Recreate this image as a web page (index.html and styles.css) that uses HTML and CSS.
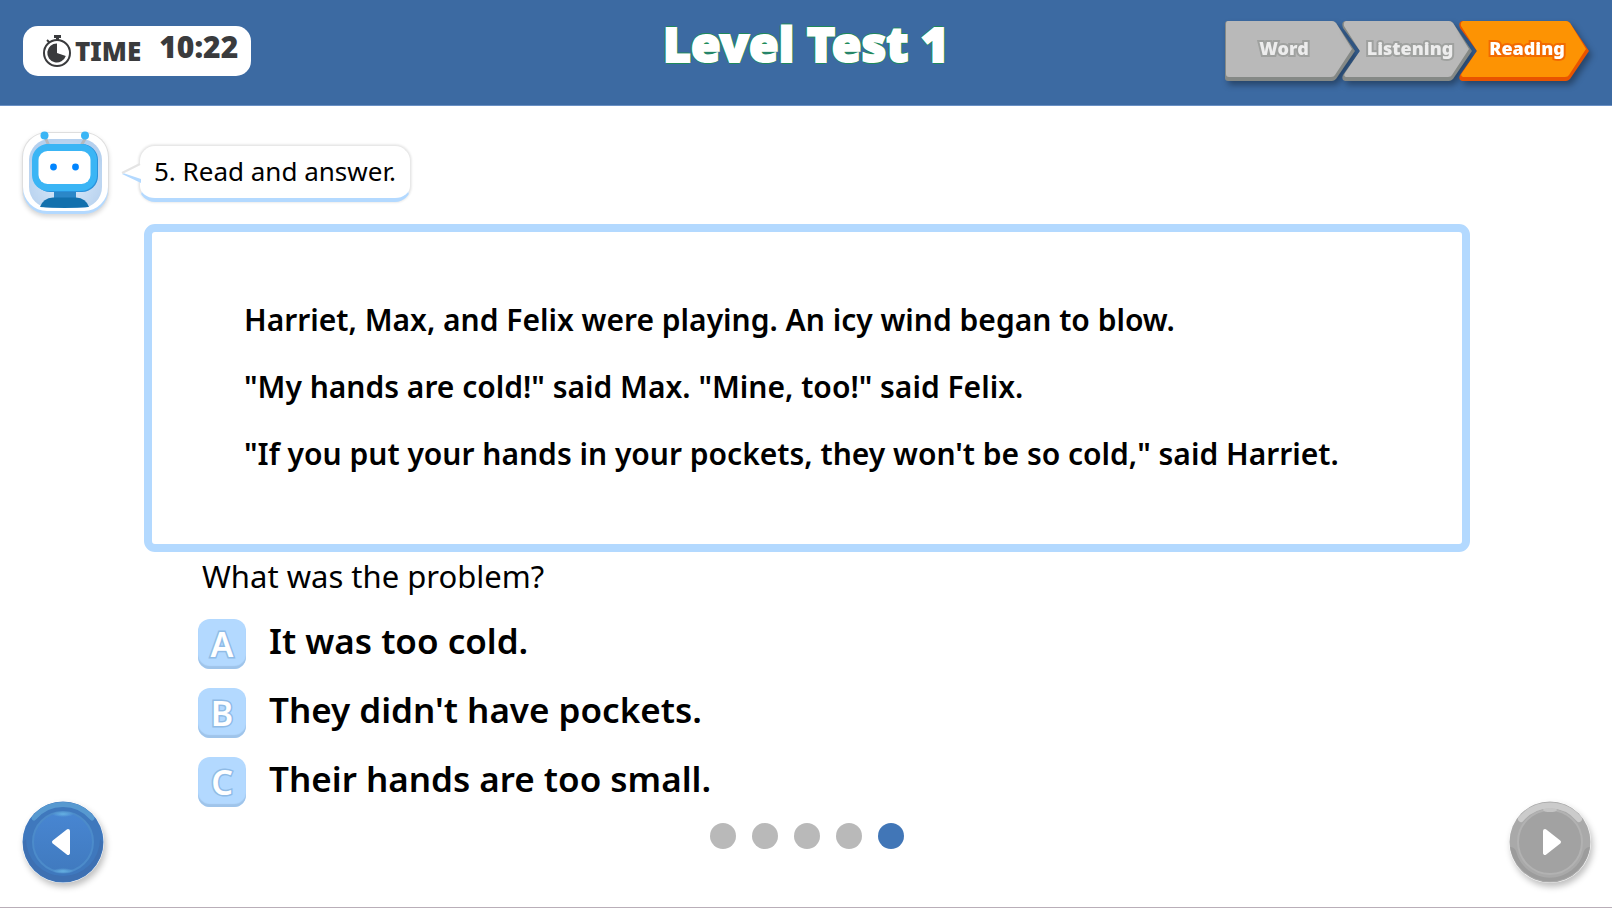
FILE: index.html
```html
<!DOCTYPE html>
<html lang="en">
<head>
<meta charset="utf-8">
<meta name="viewport" content="width=device-width, initial-scale=1">
<title>Level Test 1</title>
<link rel="stylesheet" href="styles.css">
</head>
<body>
<header class="topbar">
  <div class="timer">
    <svg class="timer-icon" viewBox="0 0 28 32" aria-hidden="true">
      <rect x="11" y="0" width="7" height="3" fill="#3a3b3d"/>
      <rect x="13" y="2" width="3" height="4" fill="#3a3b3d"/>
      <path d="M4 5l3 3" stroke="#3a3b3d" stroke-width="2"/>
      <circle cx="14" cy="18" r="13" fill="#fff" stroke="#3a3b3d" stroke-width="2"/>
      <path d="M14 18V8.500A9.500 9.500 0 1 0 22.800 21z" fill="#3a3b3d"/>
    </svg>
    <span class="timer-label">TIME</span>
    <time class="timer-value">10:22</time>
  </div>
  <h1 class="title">Level Test 1</h1>
  <ol class="steps">
    <li class="step step-first">
      <svg class="step-shape" viewBox="0 0 130 60" aria-hidden="true">
        <path d="M3 0H107Q109 0 111 2L130 30L111 58Q109 60 107 60H3Q0 60 0 57V3Q0 0 3 0Z" fill="#858986"/>
        <path d="M3 0H107Q109 0 111 2L127 28L110 54Q109 56 106 56H4Q1 56 1 53V3Q1 0 3 0Z" fill="#b9b9b9"/>
      </svg>
      <span class="step-name">Word</span>
    </li>
    <li class="step">
      <svg class="step-shape" viewBox="0 0 130 60" aria-hidden="true">
        <path d="M3 0H107Q109 0 111 2L130 30L111 58Q109 60 107 60H3Q-1 59 1 54L18 30L1 7Q-1 1 3 0Z" fill="#858986"/>
        <path d="M4 0H107Q109 0 111 2L127 28L110 54Q109 56 106 56H4Q1 55 3 52L18 30L2 5Q1 1 4 0Z" fill="#b9b9b9"/>
      </svg>
      <span class="step-name">Listening</span>
    </li>
    <li class="step step-current" aria-current="step">
      <svg class="step-shape" viewBox="0 0 130 60" aria-hidden="true">
        <path d="M3 0H107Q109 0 111 2L130 30L111 58Q109 60 107 60H3Q-1 59 1 54L18 30L1 7Q-1 1 3 0Z" fill="#e95400"/>
        <path d="M4 0H107Q109 0 111 2L127 28L110 54Q109 56 106 56H4Q1 55 3 52L18 30L2 5Q1 1 4 0Z" fill="#fd9303"/>
      </svg>
      <span class="step-name">Reading</span>
    </li>
  </ol>
</header>

<main class="page">
  <div class="intro">
    <svg class="robot" viewBox="0 0 88 88" role="img" aria-label="Robot">
      <defs>
        <radialGradient id="face" cx="50%" cy="60%" r="60%">
          <stop offset="0" stop-color="#e0eefc"/>
          <stop offset="1" stop-color="#b5d0ee"/>
        </radialGradient>
      </defs>
      <rect x="0" y="3" width="87" height="83" rx="25" fill="#dedede"/>
      <rect x="1" y="6" width="85" height="79" rx="24" fill="#b3d9ff"/>
      <rect x="1" y="4" width="85" height="78" rx="24" fill="#fff"/>
      <rect x="7" y="10" width="73" height="69" rx="21" fill="url(#face)"/>
      <path d="M23 8L27 17M64 8L59 17" stroke="#b5b9bf" stroke-width="3"/>
      <circle cx="22.500" cy="6.500" r="4" fill="#3ab5f5"/>
      <circle cx="63" cy="6.500" r="4" fill="#3ab5f5"/>
      <rect x="32" y="60" width="22" height="10" fill="#2b87c8"/>
      <path d="M18 78Q21 69 31 68.500H54Q64 69 67 78Q43 80 18 78Z" fill="#1270ad"/>
      <rect x="12" y="15" width="64" height="48" rx="16" fill="#2a93dc"/>
      <rect x="10" y="15" width="65" height="47" rx="16" fill="#3ab5f5"/>
      <rect x="16.500" y="22" width="52" height="33" rx="9" fill="#fff"/>
      <circle cx="31.500" cy="38" r="3.400" fill="#0085ff"/>
      <circle cx="53.500" cy="38" r="3.400" fill="#0085ff"/>
    </svg>
    <div class="bubble">
      <svg class="bubble-tail" viewBox="0 0 20 22" aria-hidden="true">
        <path d="M20 3L1 12L20 21Z" fill="#b3d9ff"/>
        <path d="M20 1L2 11L20 17Z" fill="#fff"/>
        <path d="M19 2L1 11" stroke="#e4e4e4" stroke-width="2"/>
      </svg>
      <h2 class="bubble-text">5. Read and answer.</h2>
    </div>
  </div>

  <div class="stage">
    <button class="nav" type="button" aria-label="Previous">
      <svg viewBox="0 0 82 82" aria-hidden="true">
        <defs>
          <linearGradient id="blue" x1="0" y1="0" x2="0" y2="1">
            <stop offset="0" stop-color="#4886d2"/>
            <stop offset="1" stop-color="#407abf"/>
          </linearGradient>
          <radialGradient id="glow">
            <stop offset="0" stop-color="#66b2e2"/>
            <stop offset="1" stop-color="#66b2e2" stop-opacity="0"/>
          </radialGradient>
        </defs>
        <circle cx="41" cy="41" r="40.500" fill="#3f78bd"/>
        <path d="M4 38A37 37 0 0 0 78 38L81 41A40 40 0 0 1 1 41Z" fill="#3e70b2"/>
        <path d="M12 17A38 38 0 0 1 70 17" fill="none" stroke="#5799d0" stroke-width="5" stroke-linecap="round"/>
        <circle cx="41" cy="41" r="30" fill="url(#blue)" stroke="#4c8bca" stroke-width="2"/>
        <ellipse cx="41" cy="13" rx="11" ry="3" fill="url(#glow)"/>
        <ellipse cx="41" cy="70" rx="11" ry="3" fill="url(#glow)"/>
        <path d="M46 30L32 41L46 52Z" fill="#fff" stroke="#fff" stroke-width="4" stroke-linejoin="round"/>
      </svg>
    </button>

    <div class="content">
      <article class="passage">
        <p>Harriet, Max, and Felix were playing. An icy wind began to blow.</p>
        <p>"My hands are cold!" said Max. "Mine, too!" said Felix.</p>
        <p>"If you put your hands in your pockets, they won't be so cold," said Harriet.</p>
      </article>
      <section class="quiz">
        <h3 class="question">What was the problem?</h3>
        <button class="option" type="button"><span class="badge">A</span><span>It was too cold.</span></button>
        <button class="option" type="button"><span class="badge">B</span><span>They didn't have pockets.</span></button>
        <button class="option" type="button"><span class="badge">C</span><span>Their hands are too small.</span></button>
      </section>
      <div class="dots" role="img" aria-label="Question 5 of 5">
        <span class="dot"></span><span class="dot"></span><span class="dot"></span><span class="dot"></span><span class="dot dot-current"></span>
      </div>
    </div>

    <button class="nav" type="button" aria-label="Next">
      <svg viewBox="0 0 82 82" aria-hidden="true">
        <circle cx="41" cy="41" r="40.500" fill="#a9a9a9"/>
        <path d="M1 46Q5 46 7 50A35 35 0 0 0 75 50Q77 46 81 46A40.500 40.500 0 0 1 1 46Z" fill="#9c9c9c"/>
        <path d="M12 18A38 38 0 0 1 70 18" fill="none" stroke="#cbcbcb" stroke-width="6" stroke-linecap="round"/>
        <circle cx="41" cy="41" r="32" fill="#a2a2a2" stroke="#b2b2b2" stroke-width="2"/>
        <ellipse cx="41" cy="9" rx="7" ry="2" fill="#c4c4c4"/>
        <path d="M36 30L50 41L36 52Z" fill="#fff" stroke="#fff" stroke-width="4" stroke-linejoin="round"/>
      </svg>
    </button>
  </div>
</main>
</body>
</html>
```

FILE: styles.css
```css
* {
  box-sizing: border-box;
}

body {
  display: flex;
  flex-direction: column;
  min-height: 100vh;
  margin: 0;
  background: #fff;
  border-bottom: 1px solid #b9aeb8;
  color: #000;
  font-family: "Noto Sans", "Open Sans", sans-serif;
}

h1, h2, h3, p, ol {
  margin: 0;
  padding: 0;
}

button {
  padding: 0;
  border: 0;
  background: none;
  color: inherit;
  font: inherit;
  cursor: pointer;
}

.topbar {
  display: grid;
  grid-template-columns: 1fr auto 1fr;
  align-items: start;
  padding: 21px 23px 24px;
  background: #3c6aa2;
  border-bottom: 1px solid #6a90c4;
}

.timer {
  display: flex;
  align-items: center;
  justify-self: start;
  height: 50px;
  margin-top: 5px;
  padding: 0 13px 0 20px;
  border-radius: 15px;
  background: #fff;
  color: #3a3b3d;
  font-weight: 900;
  line-height: 40px;
}

.timer-icon {
  width: 28px;
  height: 32px;
}

.timer-label {
  margin-left: 4px;
  font-size: 26px;
}

.timer-value {
  margin: 0 0 8px 18px;
  font-size: 30px;
}

.title {
  color: #fff;
  font-size: 48px;
  font-weight: 900;
  line-height: 46px;
  -webkit-text-stroke: 2px #fff;
  text-shadow:
    2px 0 #1f8a5a, -2px 0 #1f8a5a, 0 2px #1f8a5a, 0 -2px #1f8a5a,
    1px 1px #1f8a5a, -1px 1px #1f8a5a, 1px -1px #1f8a5a, -1px -1px #1f8a5a;
}

.steps {
  display: flex;
  justify-self: end;
  list-style: none;
}

.step {
  position: relative;
  width: 130px;
  height: 60px;
  padding-left: 6px;
  color: #ededed;
  font-size: 18px;
  font-weight: 900;
  line-height: 54px;
  text-align: center;
  filter: drop-shadow(3px 4px 3px rgb(0 0 0 / 35%));
}

.step + .step {
  margin-left: -13px;
}

.step-first {
  padding: 0 12px 0 0;
}

.step-shape {
  position: absolute;
  inset: 0;
  width: 100%;
  height: 100%;
}

.step-name {
  position: relative;
  -webkit-text-stroke: 4px #9fa19f;
  paint-order: stroke fill;
}

.step-current {
  color: #fff;
}

.step-current .step-name {
  -webkit-text-stroke-color: #f26a00;
}

.page {
  display: flex;
  flex: 1;
  flex-direction: column;
  padding: 23px 21px 24px 22px;
}

.intro {
  display: flex;
  align-items: center;
  gap: 29px;
}

.robot {
  width: 88px;
  height: 88px;
  filter: drop-shadow(0 2px 2px rgb(0 0 0 / 15%));
}

.bubble {
  position: relative;
  padding: 0 14px;
  border: 1px solid #e8e8e8;
  border-bottom: 4px solid #b3d9ff;
  border-radius: 16px;
  background: #fff;
  box-shadow: 0 0 2px 1px #ececec;
}

.bubble-tail {
  position: absolute;
  top: 16px;
  left: -19px;
  width: 20px;
  height: 22px;
}

.bubble-text {
  padding-bottom: 2px;
  font-size: 26px;
  font-weight: 400;
  line-height: 50px;
}

.stage {
  display: flex;
  flex: 1;
  align-items: flex-end;
  padding-top: 7px;
}

.nav {
  flex: none;
  width: 82px;
  height: 82px;
  border-radius: 50%;
  box-shadow: 2px 4px 6px rgb(0 0 0 / 25%);
}

.content {
  flex: 1;
  align-self: stretch;
  margin: 0 39px 0 40px;
}

.passage {
  padding: 54px 92px 57px;
  border: 8px solid #b3d9ff;
  border-radius: 11px;
  font-size: 30px;
  font-weight: 600;
  line-height: 67px;
}

.quiz {
  display: flex;
  flex-direction: column;
  align-items: flex-start;
  gap: 19px;
  padding-left: 54px;
}

.question {
  padding: 1px 0 1px 4px;
  font-size: 31px;
  font-weight: 400;
  line-height: 46px;
}

.option {
  display: flex;
  align-items: flex-start;
  gap: 23px;
  font-size: 35px;
  font-weight: 600;
  line-height: 44px;
  text-align: left;
}

.badge {
  width: 48px;
  height: 50px;
  border-radius: 12px;
  background: #b3d9ff;
  box-shadow: inset 0 -3px 1px #9fc4ea;
  color: #fff;
  font-size: 34px;
  font-weight: 600;
  line-height: 50px;
  text-align: center;
  -webkit-text-stroke: 3px #8fbbe6;
  paint-order: stroke fill;
}

.dots {
  display: flex;
  justify-content: center;
  gap: 16px;
  margin-top: 16px;
}

.dot {
  width: 26px;
  height: 26px;
  border-radius: 50%;
  background: #b9b9b9;
}

.dot-current {
  background: #4176b7;
}
```
